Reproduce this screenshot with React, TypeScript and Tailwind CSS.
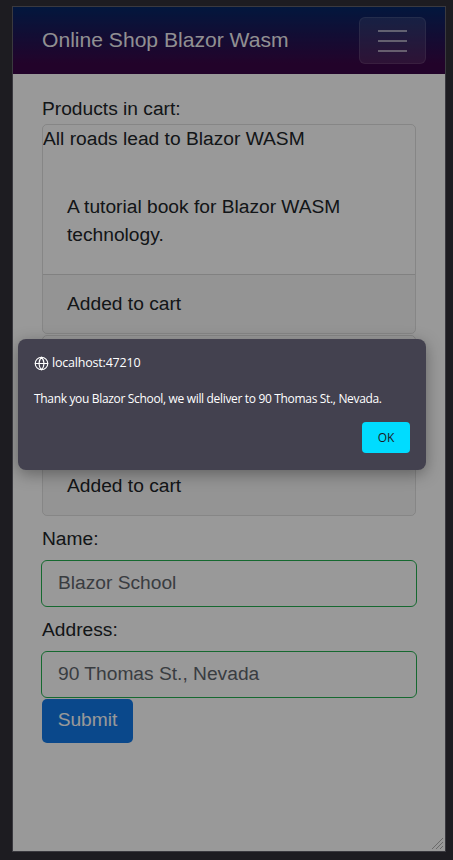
import React from 'react'

const cart = [
  {
    title: 'All roads lead to Blazor WASM',
    description: 'A tutorial book for Blazor WASM technology.',
  },
  {
    title: 'Blazor Server in action',
    description: 'A tutorial book for Blazor.',
  },
]

const GlobeIcon = () => (
  <svg width="15" height="15" viewBox="0 0 24 24" fill="none" stroke="currentColor" strokeWidth="1.8" strokeLinecap="round" strokeLinejoin="round">
    <circle cx="12" cy="12" r="10" />
    <path d="M12 2a14.5 14.5 0 0 0 0 20 14.5 14.5 0 0 0 0-20" />
    <path d="M2 12h20" />
  </svg>
)

export default function App() {
  return (
    <div className="w-[453px] h-[860px] bg-[#1d1c21] pt-[6px] pl-[12px]">
      <div className="relative w-[434px] h-[846px] border border-[#3a393f] bg-white overflow-hidden font-['Liberation_Sans',Arial,sans-serif] text-[#212529] text-[19.2px] leading-[28.8px]">
        {/* top row */}
        <div className="h-[67px] flex items-center justify-between pl-[29px] pr-[19px] bg-[linear-gradient(180deg,#052767_0%,#3a0647_85%)]">
          <span className="text-[21.1px] text-white/95">Online Shop Blazor Wasm</span>
          <button className="w-[67px] h-[47px] rounded-[6px] border border-white/10 bg-white/10 flex flex-col items-center justify-center gap-[8px]">
            <span className="block w-[29px] h-[2px] bg-white/55" />
            <span className="block w-[29px] h-[2px] bg-white/55" />
            <span className="block w-[29px] h-[2px] bg-white/55" />
          </button>
        </div>

        <div className="px-[29px] pt-[21px]">
          <div>Products in cart:</div>
          <div className="flex flex-col gap-[1px]">
            {cart.map((item) => (
              <div key={item.title} className="border border-black/[0.125] rounded-[5px] overflow-hidden">
                <div>{item.title}</div>
                <div className="px-[24px] pt-[39px] pb-[24px]">{item.description}</div>
                <div className="border-t border-black/[0.125] bg-black/[0.03] px-[24px] py-[14.4px]">Added to cart</div>
              </div>
            ))}
          </div>

          <div className="mt-[9px] mb-[6px]">Name:</div>
          <div className="-mx-[1px] h-[47px] rounded-[6px] border border-[#26b050] flex items-center pl-[16px] text-[#5f666d]">
            Blazor School
          </div>
          <div className="mt-[9px] mb-[6px]">Address:</div>
          <div className="-mx-[1px] h-[47px] rounded-[6px] border border-[#26b050] flex items-center pl-[16px] text-[#5f666d]">
            90 Thomas St., Nevada
          </div>
          <button className="mt-[1px] w-[91px] h-[44px] rounded-[5px] bg-[#1279e8] text-white">Submit</button>
        </div>

        {/* dim overlay */}
        <div className="absolute inset-0 bg-black/40" />

        {/* resize grip */}
        <svg className="absolute right-[1px] bottom-[1px]" width="13" height="13" viewBox="0 0 13 13" stroke="#6a6a6a" strokeWidth="1">
          <path d="M1 12L12 1M5 12L12 5M9 12L12 9" />
        </svg>

        {/* alert dialog */}
        <div className="absolute left-[5px] top-[332px] w-[408px] h-[131px] rounded-[8px] bg-[#43414f] shadow-[0_4px_16px_rgba(0,0,0,0.35)] px-[16px] pt-[16px] font-['Open_Sans',sans-serif] text-[12px] leading-[16px] text-white">
          <div className="flex items-center gap-[3px]">
            <GlobeIcon />
            <span className="text-[12.5px] font-medium tracking-[-0.2px]">localhost:47210</span>
          </div>
          <div className="mt-[20px] tracking-[-0.33px]">Thank you Blazor School, we will deliver to 90 Thomas St., Nevada.</div>
          <div className="mt-[15px] flex justify-end">
            <button className="w-[48px] h-[31px] rounded-[4px] bg-[#00dcff] text-[#1b1b1f] text-[12px]">OK</button>
          </div>
        </div>
      </div>
    </div>
  )
}
